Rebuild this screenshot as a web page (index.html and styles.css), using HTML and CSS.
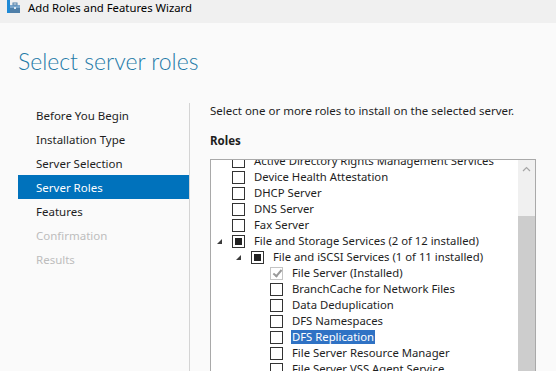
FILE: index.html
```html
<!DOCTYPE html>
<html lang="en">
  <head>
    <meta charset="UTF-8" />
    <meta name="viewport" content="width=device-width, initial-scale=1.0" />
    <title>Add Roles and Features Wizard</title>
    <link rel="stylesheet" href="styles.css">
  </head>
  <body>
    <div class="titlebar">
      <svg class="app-icon" width="14" height="14" viewBox="0 0 14 14">
        <rect x="0" y="0" width="3" height="13" fill="#1f8ad6" />
        <rect x="3" y="5" width="10" height="8" fill="#4f7fa8" />
        <rect x="3" y="5" width="10" height="3" fill="#7aa6cc" />
        <rect x="6" y="3" width="4" height="2" fill="none" stroke="#4f7fa8" stroke-width="1" />
        <rect x="7" y="7" width="2" height="2" fill="#dfe9f2" />
      </svg>
      <span class="title">Add Roles and Features Wizard</span>
    </div>

    <h1 class="heading">Select server roles</h1>

    <div class="content">
      <!-- Wizard steps -->
      <ul class="nav">
        <li>Before You Begin</li>
        <li>Installation Type</li>
        <li>Server Selection</li>
        <li class="active">Server Roles</li>
        <li>Features</li>
        <li class="disabled">Confirmation</li>
        <li class="disabled">Results</li>
      </ul>

      <div class="main">
        <p class="intro">Select one or more roles to install on the selected server.</p>
        <div class="label-roles">Roles</div>

        <div class="listbox">
          <div class="list">
            <div class="row lvl1"><span class="exp"></span><span class="cb"></span><span class="text">Active Directory Rights Management Services</span></div>
            <div class="row lvl1"><span class="exp"></span><span class="cb"></span><span class="text">Device Health Attestation</span></div>
            <div class="row lvl1"><span class="exp"></span><span class="cb"></span><span class="text">DHCP Server</span></div>
            <div class="row lvl1"><span class="exp"></span><span class="cb"></span><span class="text">DNS Server</span></div>
            <div class="row lvl1"><span class="exp"></span><span class="cb"></span><span class="text">Fax Server</span></div>
            <div class="row lvl1"><span class="exp open"></span><span class="cb partial"></span><span class="text">File and Storage Services (2 of 12 installed)</span></div>
            <div class="row lvl2"><span class="exp open"></span><span class="cb partial"></span><span class="text">File and iSCSI Services (1 of 11 installed)</span></div>
            <div class="row lvl3"><span class="exp"></span><span class="cb checked"></span><span class="text">File Server (Installed)</span></div>
            <div class="row lvl3"><span class="exp"></span><span class="cb"></span><span class="text">BranchCache for Network Files</span></div>
            <div class="row lvl3"><span class="exp"></span><span class="cb"></span><span class="text">Data Deduplication</span></div>
            <div class="row lvl3"><span class="exp"></span><span class="cb"></span><span class="text">DFS Namespaces</span></div>
            <div class="row lvl3"><span class="exp"></span><span class="cb"></span><span class="text selected">DFS Replication</span></div>
            <div class="row lvl3"><span class="exp"></span><span class="cb"></span><span class="text">File Server Resource Manager</span></div>
            <div class="row lvl3"><span class="exp"></span><span class="cb"></span><span class="text">File Server VSS Agent Service</span></div>
            <div class="row lvl3"><span class="exp"></span><span class="cb"></span><span class="text">iSCSI Target Server</span></div>
          </div>
          <div class="scrollbar">
            <div class="track">
              <svg width="9" height="6" viewBox="0 0 9 6">
                <path d="M1 5 L4.5 1.5 L8 5" fill="none" stroke="#a6a6a6" stroke-width="1.2" />
              </svg>
            </div>
            <div class="thumb"></div>
          </div>
        </div>
      </div>
    </div>
  </body>
</html>
```

FILE: styles.css
```css
body {
  margin: 0;
  width: 556px;
  height: 371px;
  overflow: hidden;
  background-color: #fafafa;
  font-family: "Noto Sans", "Open Sans", sans-serif;
  font-size: 11.5px;
  color: #1e1e1e;
}

/* Window title bar */
.titlebar {
  height: 23px;
  background-color: #f0f0f0;
  display: flex;
  align-items: flex-start;
}

.app-icon {
  margin-left: 7px;
  margin-right: 7px;
}

.title {
  line-height: 15px;
  font-size: 11.3px;
  color: #000;
}

.heading {
  margin: 23px 0 0 18px;
  font-family: "Lato", "Noto Sans", sans-serif;
  font-size: 23px;
  line-height: 31px;
  font-weight: 300;
  color: #1f7aa8;
}

.content {
  display: flex;
  margin-top: 26px;
}

/* Wizard steps */
.nav {
  list-style: none;
  margin: 0 0 0 18px;
  padding: 0;
  width: 172px;
  height: 280px;
  border-right: 1px solid #d4d4d4;
  box-sizing: border-box;
}

.nav li {
  height: 24px;
  line-height: 25px;
  padding-left: 18px;
}

.nav li.active {
  background-color: #0072bc;
  color: #fff;
}

.nav li.disabled {
  color: #bdbdbd;
}

.main {
  padding-left: 20px;
  flex: 1;
}

.intro {
  margin: 0;
  line-height: 16px;
}

.label-roles {
  margin-top: 14px;
  line-height: 16px;
  font-weight: bold;
}

/* Roles list */
.listbox {
  margin-top: 10px;
  width: 326px;
  height: 240px;
  background-color: #fff;
  border: 1px solid #a9a9a9;
  box-sizing: border-box;
  display: flex;
  overflow: hidden;
}

.list {
  flex: 1;
  margin-top: -7px;
  font-size: 11.3px;
}

.row {
  height: 16px;
  display: flex;
  align-items: center;
  white-space: nowrap;
}

.lvl2 {
  padding-left: 19px;
}

.lvl3 {
  padding-left: 38px;
}

.exp {
  width: 21px;
  height: 16px;
  position: relative;
  flex-shrink: 0;
}

/* expanded tree glyph */
.exp.open::after {
  content: "";
  position: absolute;
  left: 6px;
  top: 6px;
  width: 0;
  height: 0;
  border-left: 5px solid transparent;
  border-bottom: 5px solid #3c3c3c;
}

.cb {
  width: 13px;
  height: 13px;
  border: 1px solid #333;
  background-color: #fff;
  box-sizing: border-box;
  position: relative;
  flex-shrink: 0;
}

.cb.partial::after {
  content: "";
  position: absolute;
  left: 2px;
  top: 2px;
  width: 7px;
  height: 7px;
  background-color: #222;
}

.cb.checked {
  border-color: #c4c4c4;
}

.cb.checked::after {
  content: "";
  position: absolute;
  left: 3.5px;
  top: 0.5px;
  width: 3px;
  height: 7px;
  border-right: 2px solid #9a9a9a;
  border-bottom: 2px solid #9a9a9a;
  transform: rotate(40deg);
}

.text {
  margin-left: 8px;
  padding: 0 1px;
  line-height: 14px;
}

.text.selected {
  background-color: #2f72c4;
  color: #fff;
}

.scrollbar {
  width: 17px;
  flex-shrink: 0;
  display: flex;
  flex-direction: column;
}

.track {
  height: 56px;
  background-color: #f0f0f0;
  display: flex;
  justify-content: center;
  padding-top: 6px;
  box-sizing: border-box;
}

.thumb {
  flex: 1;
  background-color: #cdcdcd;
}
```
